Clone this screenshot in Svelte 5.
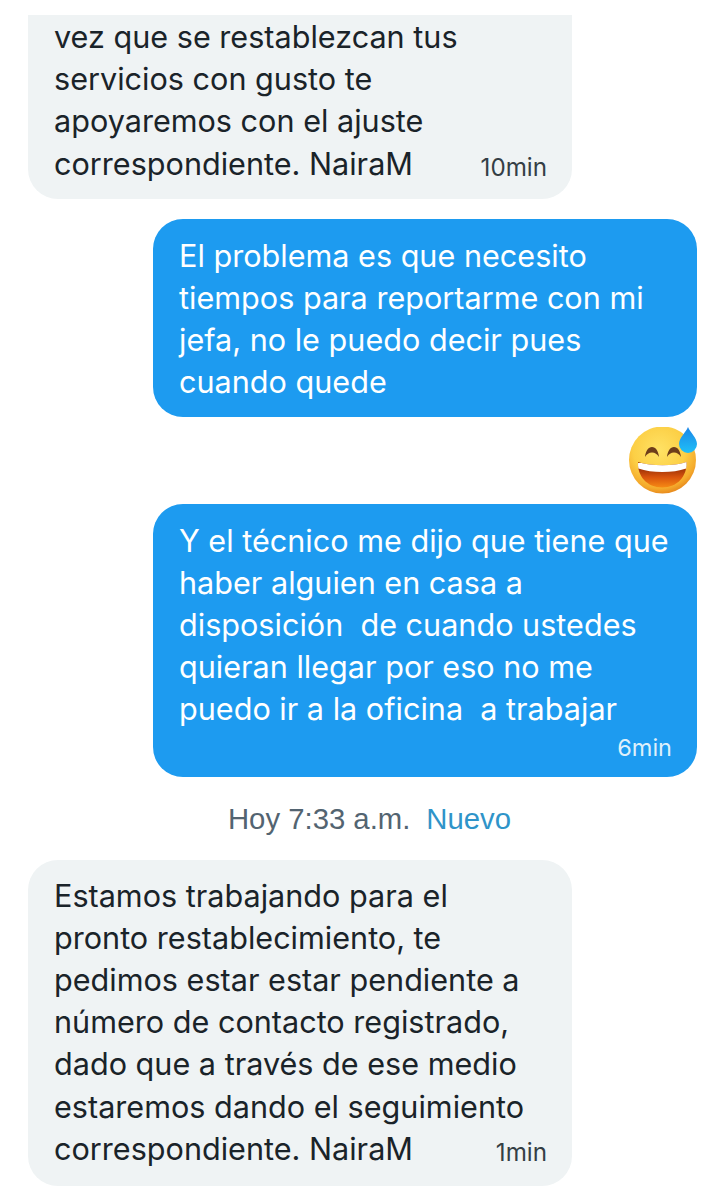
<script>
	const closing = {
		lines: [
			"Estamos trabajando para el",
			"pronto restablecimiento, te",
			"pedimos estar estar pendiente a",
			"número de contacto registrado,",
			"dado que a través de ese medio",
			"estaremos dando el seguimiento",
		],
		last: "correspondiente. NairaM",
		time: "1min",
	};
</script>

<main class="thread">
	<div class="bubble them cut">
		<p>vez que se restablezcan tus
servicios con gusto te
apoyaremos con el ajuste</p>
		<div class="last">
			<p>correspondiente. NairaM</p>
			<span class="time">10min</span>
		</div>
	</div>

	<div class="bubble me first">
		<p>El problema es que necesito
tiempos para reportarme con mi
jefa, no le puedo decir pues
cuando quede</p>
	</div>

	<div class="reaction">
		<svg width="70" height="68" viewBox="0 0 70 68" aria-hidden="true">
			<defs>
				<radialGradient id="face" cx="45%" cy="35%" r="65%">
					<stop offset="0" stop-color="#ffe265" />
					<stop offset="0.6" stop-color="#fccf45" />
					<stop offset="0.88" stop-color="#f5ab2c" />
					<stop offset="1" stop-color="#e98d1f" />
				</radialGradient>
				<linearGradient id="mouth" x1="0" y1="0" x2="0" y2="1">
					<stop offset="0.25" stop-color="#9c3208" />
					<stop offset="0.6" stop-color="#d9540d" />
					<stop offset="1" stop-color="#f68a14" />
				</linearGradient>
				<linearGradient id="drop" x1="0" y1="0" x2="0" y2="1">
					<stop offset="0" stop-color="#1c86e8" />
					<stop offset="1" stop-color="#1fc0f7" />
				</linearGradient>
			</defs>
			<circle cx="35.500" cy="33" r="33.500" fill="url(#face)" />
			<path d="M18 30c.6-6 3.300-10 7-10s6.400 4 7 10c-1.800-3-4-4.600-7-4.600s-5.200 1.600-7 4.600z" fill="#6e3d1a" />
			<path d="M40 30c.6-6 3.300-10 7-10s6.400 4 7 10c-1.800-3-4-4.600-7-4.600s-5.200 1.600-7 4.600z" fill="#6e3d1a" />
			<path d="M11 35c7 2.300 15 3.300 24.500 3.300s17.500-1 24-3.300c.8 14-9 25.500-24.200 25.500S10.200 49 11 35z" fill="url(#mouth)" />
			<path d="M11 35c7 2.300 15 3.300 24.500 3.300s17.500-1 24-3.300c.2 2.400.1 4.500-.3 6.500-7 2.400-15 3.500-23.900 3.500s-16.900-1.100-23.900-3.500c-.4-2-.5-4.100-.3-6.500z" fill="#fff" />
			<path d="M61 0c2 5.500 9 10.500 9 17a9 9 0 0 1-18 0C52 10.500 59 5.500 61 0z" fill="url(#drop)" />
		</svg>
	</div>

	<div class="bubble me">
		<p>Y el técnico me dijo que tiene que
haber alguien en casa a
disposición  de cuando ustedes
quieran llegar por eso no me
puedo ir a la oficina  a trabajar</p>
		<div class="stamp">6min</div>
	</div>

	<div class="divider">
		<span>Hoy 7:33 a.m.</span>
		<span class="new">Nuevo</span>
	</div>

	<div class="bubble them final">
		{#each closing.lines as line}
			<p>{line}</p>
		{/each}
		<div class="last">
			<p>{closing.last}</p>
			<span class="time">{closing.time}</span>
		</div>
	</div>
</main>

<style>
	:global(body) {
		margin: 0;
		background: #fff;
	}

	.thread {
		display: flex;
		flex-direction: column;
		width: 726px;
		height: 1200px;
		box-sizing: border-box;
		padding: 15px 29px 0 28px;
		overflow: hidden;
		font-family: Inter, "Liberation Sans", sans-serif;
		font-size: 30.6px;
		line-height: 42.2px;
		color: #1a2329;
	}

	p {
		margin: 0;
		white-space: pre;
	}

	.bubble {
		width: 544px;
		box-sizing: border-box;
		padding: 16px 25px 13px 26px;
		border-radius: 30px;
	}

	.them {
		background: #eff3f4;
	}

	.cut {
		padding-top: 1px;
		padding-bottom: 14px;
		border-radius: 0 0 30px 30px;
	}

	.final {
		padding-top: 15px;
		padding-bottom: 16px;
	}

	.me {
		align-self: flex-end;
		background: #1d9bf0;
		color: #fff;
	}

	.first {
		margin-top: 20px;
	}

	.last {
		display: flex;
		justify-content: space-between;
		align-items: flex-end;
	}

	.time {
		margin-bottom: -2px;
		font-size: 24.2px;
		line-height: 38px;
		color: #343e45;
	}

	.stamp {
		text-align: right;
		font-size: 23.5px;
		line-height: 33px;
		color: #dff0fb;
	}

	.reaction {
		display: flex;
		justify-content: flex-end;
		margin-top: 10px;
		margin-bottom: 9px;
	}

	.divider {
		display: flex;
		justify-content: center;
		gap: 16px;
		margin: 23px 0 23px;
		padding-left: 14px;
		font-family: "Liberation Sans", Arial, sans-serif;
		font-size: 29.3px;
		line-height: 37px;
		color: #536471;
	}

	.new {
		color: #2f94c9;
	}
</style>
